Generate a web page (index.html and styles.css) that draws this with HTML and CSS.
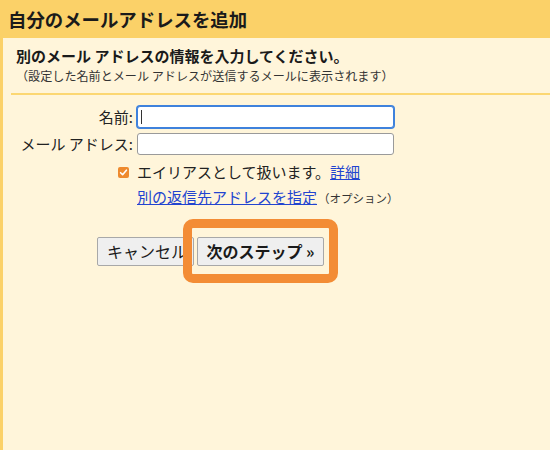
FILE: index.html
```html
<!DOCTYPE html>
<html lang="ja">
<head>
<meta charset="utf-8">
<link rel="stylesheet" href="styles.css">
</head>
<body>
<div class="page">
  <div class="header"><h1 class="title">自分のメールアドレスを追加</h1></div>
  <div class="panel">
    <div class="intro">
      <div class="lead">別のメール アドレスの情報を入力してください。</div>
      <div class="note">（設定した名前とメール アドレスが送信するメールに表示されます）</div>
    </div>
    <div class="sep"></div>
    <div class="form">
      <label class="lbl">名前:</label>
      <div class="field"><span class="input focused"><span class="caret"></span></span></div>
      <label class="lbl">メール アドレス:</label>
      <div class="field"><span class="input"></span></div>
      <div class="chkcell"><span class="chk"><svg width="11" height="11" viewBox="0 0 11 11"><path d="M2.6 5.7 L4.6 7.7 L8.4 3.2" fill="none" stroke="#fff" stroke-width="1.6" stroke-linecap="round" stroke-linejoin="round"/></svg></span></div>
      <div class="opt">エイリアスとして扱います。<a class="link" href="#">詳細</a></div>
      <div></div>
      <div class="opt reply"><a class="link" href="#">別の返信先アドレスを指定</a><span class="small">（オプション）</span></div>
    </div>
    <div class="actions">
      <button class="btn cancel">キャンセル</button>
      <span class="hl"><button class="btn next">次のステップ »</button></span>
    </div>
  </div>
</div>
</body>
</html>
```

FILE: styles.css
```css
html, body {
  margin: 0;
  padding: 0;
  height: 100%;
}
body {
  font-family: "Noto Sans CJK JP", "Noto Sans", sans-serif;
  color: #222;
  background: #fff5da;
}
.page {
  display: flex;
  flex-direction: column;
  height: 100%;
}
.header {
  height: 38px;
  background: #fbd168;
  display: flex;
  align-items: center;
  padding-left: 8px;
}
.title {
  margin: 0;
  font-size: 18.4px;
  font-weight: bold;
  line-height: 22px;
  color: #1a1a1a;
}
.panel {
  flex: 1;
  background: #fff5da;
  border-left: 3px solid #fbd168;
}
.intro {
  padding: 8px 0 0 13px;
}
.lead {
  font-size: 15px;
  font-weight: bold;
  line-height: 19px;
  color: #1a1a1a;
}
.note {
  margin-top: 3px;
  font-size: 12.1px;
  line-height: 16px;
  color: #333;
}
.sep {
  margin: 9px 0 0 8px;
  height: 2px;
  background: #fcd772;
}
.form {
  margin-top: 11px;
  display: grid;
  grid-template-columns: 130px 257px;
  column-gap: 4px;
  row-gap: 5px;
  align-items: center;
}
.lbl {
  text-align: right;
  font-size: 15px;
  line-height: 22px;
  color: #222;
  white-space: nowrap;
}
.field {
  height: 22px;
}
.input {
  display: block;
  box-sizing: border-box;
  width: 257px;
  height: 22px;
  background: #fff;
  border: 1px solid #9a9a9a;
  border-radius: 3px;
  position: relative;
}
.input.focused {
  border-color: #3f82dc;
  box-shadow: 0 0 0 1px #3f82dc;
}
.caret {
  position: absolute;
  left: 3px;
  top: 3px;
  width: 1px;
  height: 14px;
  background: #333;
}
.chkcell {
  display: flex;
  justify-content: flex-end;
  padding-right: 4px;
  margin-top: 3px;
}
.chk {
  display: block;
  width: 11px;
  height: 11px;
  border-radius: 2px;
  background: #ee8a2e;
}
.chk svg {
  display: block;
}
.opt {
  margin-top: 3px;
  font-size: 15px;
  line-height: 18px;
  color: #222;
  white-space: nowrap;
}
.reply {
  margin-top: 2px;
}
.link {
  color: #2244d0;
  text-decoration: underline;
}
.small {
  font-size: 11.5px;
  color: #333;
  margin-left: 1px;
}
.actions {
  display: flex;
  align-items: center;
  margin-top: 30px;
  padding-left: 94px;
  gap: 3px;
}
.btn {
  box-sizing: border-box;
  height: 29px;
  font-family: "Noto Sans CJK JP", "Noto Sans", sans-serif;
  font-size: 16px;
  line-height: 27px;
  padding: 0;
  background: #efefef;
  border: 1px solid #a8a8a8;
  border-radius: 2px;
  color: #1a1a1a;
  white-space: nowrap;
}
.cancel {
  width: 97px;
  text-align: left;
  padding-left: 9px;
}
.next {
  width: 127px;
  font-weight: bold;
}
.hl {
  position: relative;
  display: block;
}
.hl .btn {
  display: block;
}
.hl::before {
  content: "";
  position: absolute;
  top: -18px;
  left: -14px;
  right: -14px;
  bottom: -17px;
  border: 9px solid #f38c35;
  border-radius: 10px;
  z-index: 2;
}
```
